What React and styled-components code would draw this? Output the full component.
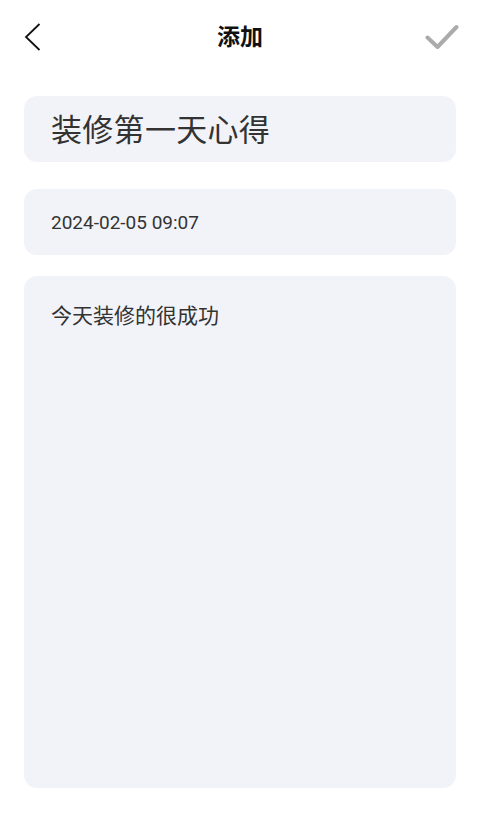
import React from "react";
import styled, { createGlobalStyle } from "styled-components";

const GlobalStyle = createGlobalStyle`
  html, body {
    margin: 0;
    padding: 0;
    background: #fff;
  }
  body {
    font-family: Roboto, "Noto Sans CJK SC", sans-serif;
    color: #333;
  }
`;

const Page = styled.div`
  width: 480px;
  min-height: 826px;
  padding: 0 24px;
  box-sizing: border-box;
  display: flex;
  flex-direction: column;
`;

const Header = styled.header`
  height: 74px;
  display: grid;
  grid-template-columns: 40px 1fr 40px;
  align-items: center;
`;

const IconButton = styled.button`
  border: none;
  background: none;
  padding: 0;
  display: flex;
  align-items: center;
  justify-content: ${(p) => (p.$end ? "flex-end" : "flex-start")};
  margin-right: ${(p) => (p.$end ? "-3px" : "0")};
  cursor: pointer;
`;

const Title = styled.h1`
  margin: -3px 0 0;
  text-align: center;
  font-family: "Noto Sans CJK SC", sans-serif;
  font-size: 23px;
  line-height: 1;
  font-weight: 700;
  color: #111;
`;

const Form = styled.div`
  display: flex;
  flex-direction: column;
  margin-top: 22px;
`;

const Card = styled.div`
  background: #f2f3f8;
  border-radius: 13px;
  padding: 0 27px;
  box-sizing: border-box;
  height: ${(p) => p.$h}px;
  margin-bottom: ${(p) => p.$gap || 0}px;
  display: flex;
  align-items: ${(p) => (p.$top ? "flex-start" : "center")};
  padding-top: ${(p) => (p.$top ? "28px" : "0")};
`;

const NoteTitle = styled.div`
  font-family: "Noto Sans CJK SC", sans-serif;
  font-size: 31px;
  line-height: 1;
  margin-top: -4px;
  color: #333;
  letter-spacing: 0.3px;
`;

const DateText = styled.div`
  font-family: Roboto, sans-serif;
  font-size: 19px;
  color: #333;
`;

const Body = styled.div`
  font-family: "Noto Sans CJK SC", sans-serif;
  font-size: 21px;
  line-height: 1;
  color: #333;
`;

export default function App() {
  return (
    <>
      <GlobalStyle />
      <Page>
        <Header>
          <IconButton aria-label="back">
            <svg width="17" height="28" viewBox="0 0 17 28">
              <path d="M15.5 1 L2 14 L15.5 27" fill="none" stroke="#111" strokeWidth="1.8" />
            </svg>
          </IconButton>
          <Title>添加</Title>
          <IconButton $end aria-label="save">
            <svg width="34" height="26" viewBox="0 0 34 26">
              <path
                d="M2.5 13.5 L12.5 23 L31.5 3"
                fill="none"
                stroke="#ababab"
                strokeWidth="4"
                strokeLinecap="round"
                strokeLinejoin="round"
              />
            </svg>
          </IconButton>
        </Header>
        <Form>
          <Card $h={66} $gap={27}>
            <NoteTitle>装修第一天心得</NoteTitle>
          </Card>
          <Card $h={66} $gap={21}>
            <DateText>2024-02-05 09:07</DateText>
          </Card>
          <Card $h={512} $top>
            <Body>今天装修的很成功</Body>
          </Card>
        </Form>
      </Page>
    </>
  );
}
